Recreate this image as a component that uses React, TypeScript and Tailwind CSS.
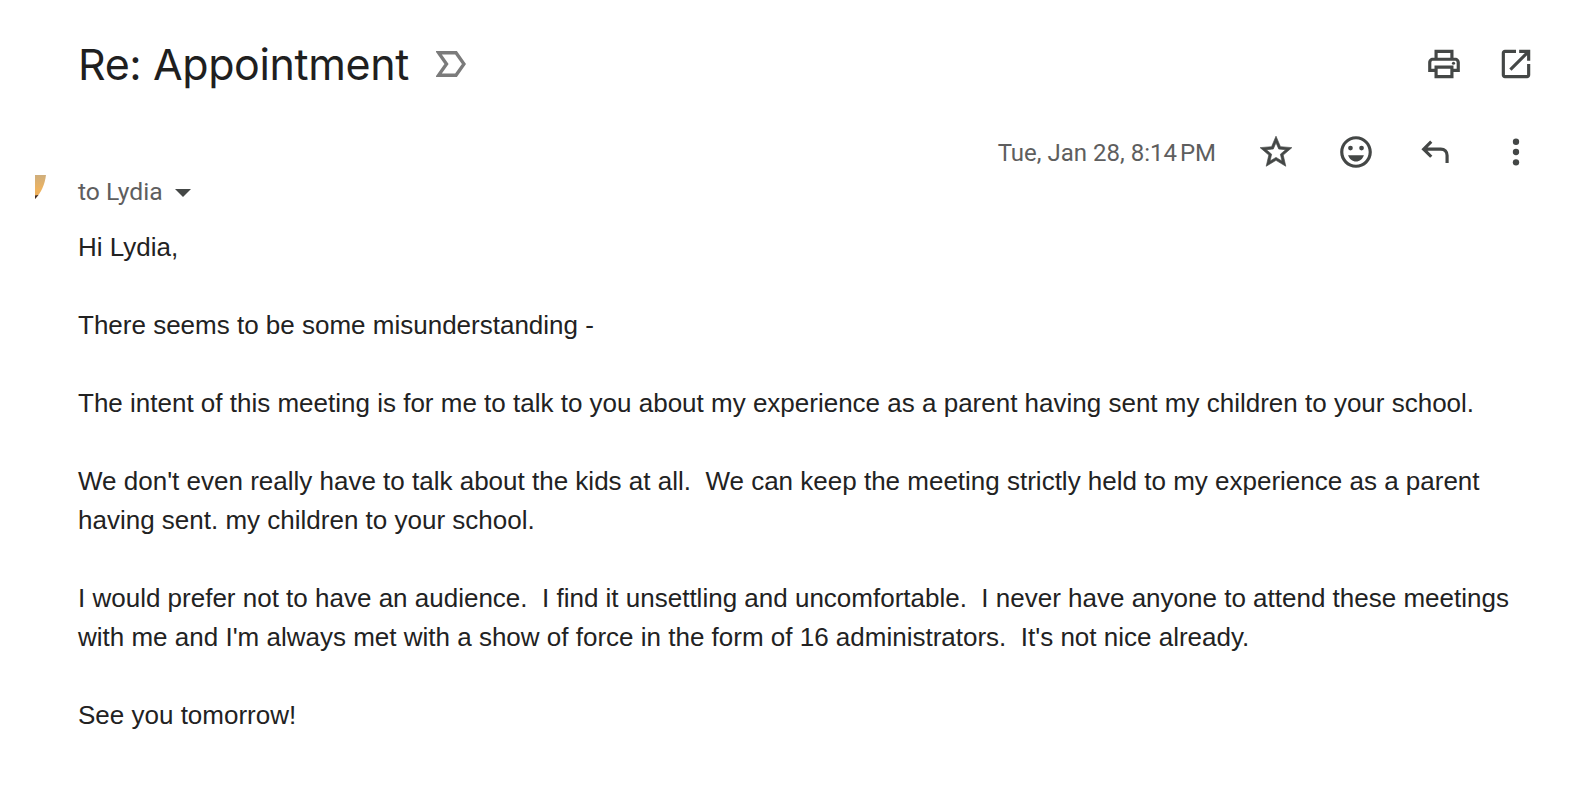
const BODY_LINES = [
  "Hi Lydia,",
  "",
  "There seems to be some misunderstanding -",
  "",
  "The intent of this meeting is for me to talk to you about my experience as a parent having sent my children to your school.",
  "",
  "We don't even really have to talk about the kids at all.  We can keep the meeting strictly held to my experience as a parent having sent. my children to your school.",
  "",
  "I would prefer not to have an audience.  I find it unsettling and uncomfortable.  I never have anyone to attend these meetings with me and I'm always met with a show of force in the form of 16 administrators.  It's not nice already.",
  "",
  "See you tomorrow!",
];

function Icon({ children }: { children: React.ReactNode }) {
  return (
    <svg viewBox="0 0 24 24" className="h-[38px] w-[38px] shrink-0 fill-[#444746]">
      {children}
    </svg>
  );
}

function LabelIcon() {
  return (
    <svg viewBox="0 0 30 26" className="ml-[27px] h-[26px] w-[30px]">
      <path d="M2.5 1.7H20L28 13l-8 11.3H2.5L10.5 13z" fill="none" stroke="#7b7b7b" strokeWidth="3.4" />
    </svg>
  );
}

function AvatarSliver() {
  return (
    <svg viewBox="0 0 11 24" className="h-6 w-[11px] -translate-y-[6px]">
      <defs>
        <linearGradient id="sliver" x1="0" y1="0" x2="0" y2="1">
          <stop offset="0" stopColor="#cfae7c" />
          <stop offset="0.6" stopColor="#eeb35f" />
          <stop offset="1" stopColor="#e9a955" />
        </linearGradient>
      </defs>
      <path d="M0 0h11C10 9 6 18 0 24z" fill="url(#sliver)" />
      <path d="M0 20.5L3.5 20 0 24z" fill="#3a2a2a" />
    </svg>
  );
}

export default function App() {
  return (
    <div className="h-[810px] w-[1578px] overflow-hidden bg-white font-['Liberation_Sans',sans-serif]">
      <header className="flex h-[128px] items-center pl-[78px] pr-[43px]">
        <h1 className="font-['Inter',sans-serif] text-[43px] font-normal tracking-[-0.4px] text-[#1f1f1f]">
          Re: Appointment
        </h1>
        <LabelIcon />
        <div className="ml-auto flex items-center gap-[34px]">
          <Icon>
            <path d="M19 8h-1V3H6v5H5c-1.66 0-3 1.34-3 3v6h4v4h12v-4h4v-6c0-1.66-1.34-3-3-3zM8 5h8v3H8V5zm8 12v2H8v-4h8v2zm2-2v-2H6v2H4v-4c0-.55.45-1 1-1h14c.55 0 1 .45 1 1v4h-2z" />
            <circle cx="18" cy="11.5" r="1" />
          </Icon>
          <Icon>
            <path d="M19 19H5V5h7V3H5c-1.11 0-2 .9-2 2v14c0 1.1.89 2 2 2h14c1.1 0 2-.9 2-2v-7h-2v7zM14 3v2h3.59l-9.83 9.83 1.41 1.41L19 6.41V10h2V3h-7z" />
          </Icon>
        </div>
      </header>

      <div className="flex h-[46px] items-center justify-end pr-[43px] pt-[2px]">
        <span className="mr-[41px] pt-[1px] font-['Roboto',sans-serif] text-[24px] text-[#5e5e5e]">
          Tue, Jan 28, 8:14{"\u202f"}PM
        </span>
        <div className="flex items-center gap-[42px]">
          <Icon>
            <path
              d="M22 9.24l-7.19-.62L12 2 9.19 8.63 2 9.24l5.46 4.73L5.82 21 12 17.27 18.18 21l-1.63-7.03L22 9.24zM12 15.4l-3.76 2.27 1-4.28-3.32-2.88 4.38-.38L12 6.1l1.71 4.04 4.38.38-3.32 2.88 1 4.28L12 15.4z"
              stroke="#444746"
              strokeWidth="0.4"
            />
          </Icon>
          <Icon>
            <path d="M11.99 2C6.47 2 2 6.48 2 12s4.47 10 9.99 10C17.52 22 22 17.52 22 12S17.52 2 11.99 2zM12 20c-4.42 0-8-3.58-8-8s3.58-8 8-8 8 3.58 8 8-3.58 8-8 8z" />
            <circle cx="15.5" cy="9.5" r="1.5" />
            <circle cx="8.5" cy="9.5" r="1.5" />
            <path d="M12 18c2.28 0 4.22-1.66 5-4H7c.78 2.34 2.72 4 5 4z" />
          </Icon>
          <Icon>
            <path d="M9 5.5 4.2 10.2 9 15M4.5 10.2H15c2.5 0 4 1.7 4 4V19" fill="none" stroke="#444746" strokeWidth="2" />
          </Icon>
          <Icon>
            <circle cx="12" cy="5.5" r="2" />
            <circle cx="12" cy="12" r="2" />
            <circle cx="12" cy="18.5" r="2" />
          </Icon>
        </div>
      </div>

      <div className="flex items-center pl-[35px]">
        <AvatarSliver />
        <span className="ml-[32px] -translate-y-[1px] font-['Roboto',sans-serif] text-[24.7px] text-[#5e5e5e]">to Lydia</span>
        <svg viewBox="0 0 16 8" className="ml-[12px] h-2 w-4 fill-[#444746]">
          <path d="M0 0h16L8 8z" />
        </svg>
      </div>

      <main className="whitespace-pre-wrap pl-[78px] pr-[40px] pt-[17px] text-[26px] leading-[39px] text-[#222]">
        {BODY_LINES.map((line, i) => (
          <div key={i} className="min-h-[39px]">
            {line}
          </div>
        ))}
      </main>
    </div>
  );
}
